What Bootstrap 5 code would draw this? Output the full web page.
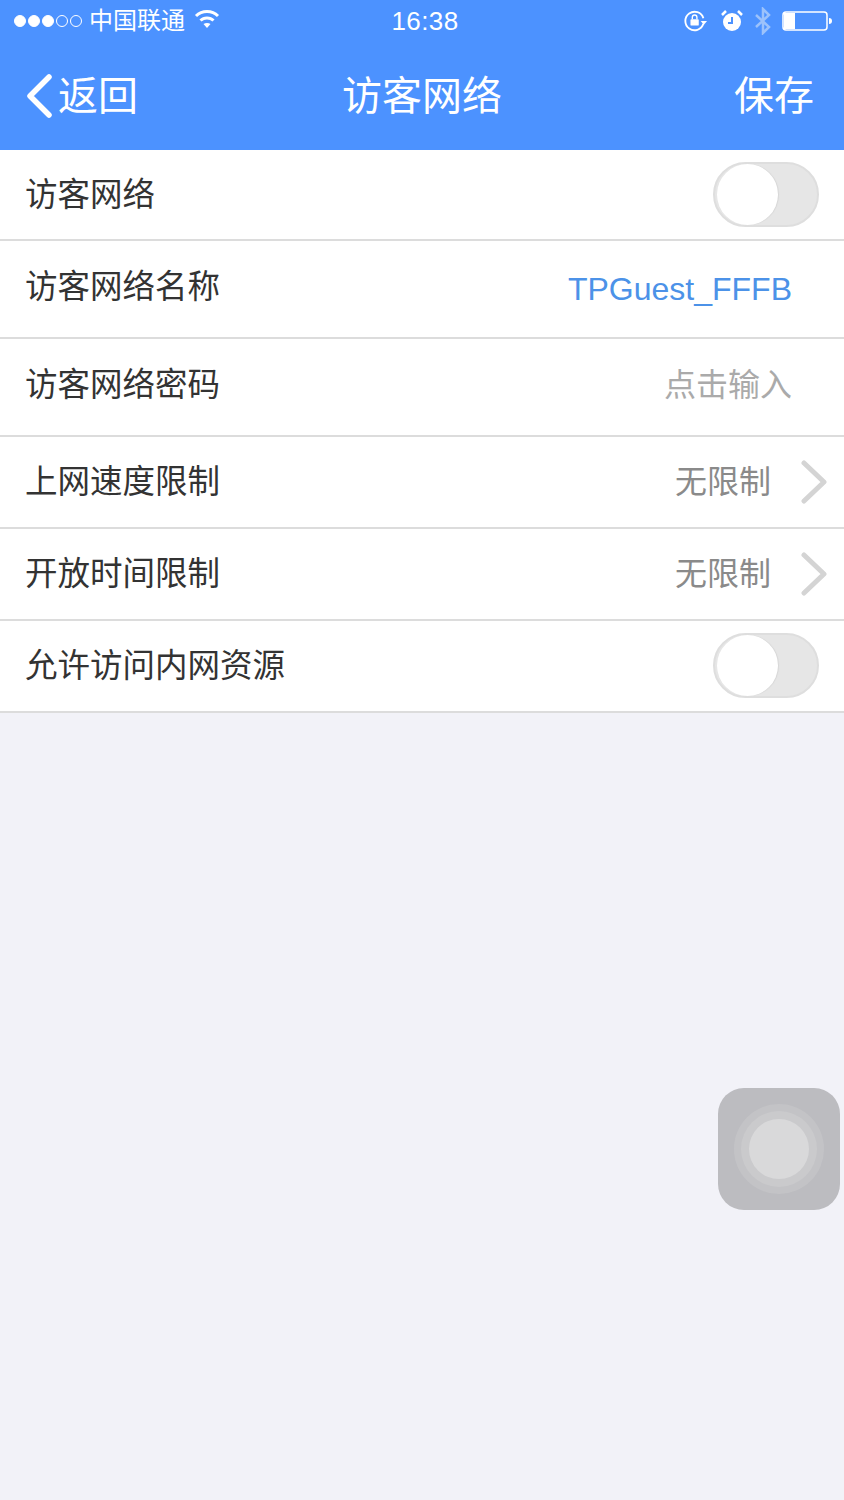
<!DOCTYPE html>
<html lang="zh-CN">
<head>
    <meta charset="UTF-8">
    <meta name="viewport" content="width=device-width, initial-scale=1">
    <title>访客网络</title>
    <link href="https://cdn.jsdelivr.net/npm/bootstrap@5.3.3/dist/css/bootstrap.min.css" rel="stylesheet">
    <style>
        body {
            background-color: #f2f2f8;
            font-family: "Liberation Sans", "Noto Sans CJK SC", sans-serif;
            color: #333;
            min-height: 1500px;
            position: relative;
        }

        /* blue header */
        .app-head {
            background-color: #4c92ff;
            color: #fff;
            height: 150px;
        }
        .status-line {
            height: 42px;
            padding: 0 12px 0 14px;
            font-size: 24px;
        }
        .sig-dots { gap: 2px; width: 69px; margin-right: 6px; }
        .sig-dot { width: 12px; height: 12px; border-radius: 50%; border: 1px solid #fff; }
        .sig-dot.on { background-color: #fff; }
        .clock-text { left: 6px; right: 0; top: 5px; text-align: center; font-size: 26px; line-height: 32px; letter-spacing: .4px; }
        .title-line { height: 108px; padding: 0 30px 0 26px; font-size: 40px; }
        .title-text { left: 0; right: 0; top: 0; bottom: 0; font-size: 40px; }
        .icon-alarm { margin-left: 13px; }
        .icon-blue { margin-left: 11px; }
        .icon-batt { margin-left: 10px; }

        /* settings rows */
        .set-row {
            background-color: #fff;
            border-bottom: 2px solid #dcdcdc;
            padding: 0 0 0 25px;
            font-size: 32.5px;
            line-height: 40px;
            color: #333;
        }
        .row-short { height: 92px; }
        .row-first { height: 91px; }
        .row-tall { height: 98px; padding-bottom: 4px; }
        .val-blue { color: #4c92e8; padding-right: 52px; padding-top: 4px; font-size: 32px; }
        .val-hint { color: #aaa; padding-right: 52px; font-size: 32px; }
        .val-gray { color: #8a8a8a; margin-right: 30px; font-size: 32px; }
        .row-chev { margin-right: 17px; }

        /* switch drawn like the iOS one */
        .ios-switch {
            width: 106px;
            height: 65px;
            margin-right: 25px;
            border-radius: 33px;
            background-color: #e6e6e6;
            border: 2px solid #dedede;
            position: relative;
        }
        .row-short .ios-switch { margin-top: -2px; }
        .ios-knob {
            position: absolute;
            left: 2px;
            top: 0;
            width: 61px;
            height: 61px;
            border-radius: 50%;
            background-color: #fff;
            box-shadow: 1px 0 1px #d6d6d6;
        }

        /* assistive touch floating button */
        .assist-btn {
            position: absolute;
            left: 718px;
            top: 1088px;
            width: 122px;
            height: 122px;
            border-radius: 26px;
            background-color: #bcbcc0;
        }
        .assist-r1, .assist-r2, .assist-r3 { border-radius: 50%; }
        .assist-r1 { width: 90px; height: 90px; background-color: #c3c3c6; }
        .assist-r2 { width: 76px; height: 76px; background-color: #cacacc; }
        .assist-r3 { width: 60px; height: 60px; background-color: #d9d9da; }
    </style>
</head>
<body>

<div class="app-head">
    <div class="status-line d-flex align-items-center position-relative">
        <div class="sig-dots d-flex align-items-center">
            <span class="sig-dot on"></span>
            <span class="sig-dot on"></span>
            <span class="sig-dot on"></span>
            <span class="sig-dot"></span>
            <span class="sig-dot"></span>
        </div>
        <span>中国联通</span>
        <svg class="ms-2 mb-1" width="28" height="22" viewBox="0 0 28 22" fill="none" stroke="#fff" stroke-width="3">
            <path d="M3 8 C9 2 19 2 25 8"/>
            <path d="M7.500 12.500 C11 9 17 9 20.500 12.500"/>
            <path d="M14 20 L10.500 16 C12.500 14.500 15.500 14.500 17.500 16 Z" fill="#fff" stroke="none"/>
        </svg>
        <div class="clock-text position-absolute">16:38</div>
        <div class="ms-auto d-flex align-items-center">
            <svg width="24" height="24" viewBox="0 0 26 24" fill="none" stroke="#fff" stroke-width="2">
                <path d="M21 15 A10 10 0 1 1 21 9"/>
                <path d="M18 12 h7 l-3.500 4 z" fill="#fff" stroke="none"/>
                <rect x="7" y="10" width="9" height="7" rx="1" fill="#fff" stroke="none"/>
                <path d="M9 10 V8 a2.500 2.500 0 0 1 5 0 V10" stroke-width="1.500"/>
            </svg>
            <svg class="icon-alarm" width="22" height="22" viewBox="0 0 22 22">
                <circle cx="11" cy="12" r="9" fill="#fff"/>
                <path d="M11 7 V13 H7" fill="none" stroke="#4c92ff" stroke-width="2"/>
                <path d="M1 5 L5 1 M21 5 L17 1" stroke="#fff" stroke-width="2.500"/>
            </svg>
            <svg class="icon-blue" width="18" height="28" viewBox="0 0 18 28" fill="none" stroke="#9cc2fb" stroke-width="2.500">
                <path d="M2 8 L15 20 L9 26 V2 L15 8 L2 20"/>
            </svg>
            <svg class="icon-batt" width="50" height="20" viewBox="0 0 50 20">
                <rect x="1" y="1" width="44" height="18" rx="3" fill="none" stroke="#fff" stroke-width="1.500"/>
                <rect x="2" y="2" width="11" height="16" fill="#fff"/>
                <path d="M47 7 a3 3 0 0 1 0 6 z" fill="#fff"/>
            </svg>
        </div>
    </div>
    <div class="title-line d-flex align-items-center justify-content-between position-relative">
        <div class="d-flex align-items-center">
            <svg width="32" height="44" viewBox="0 0 32 44" fill="none" stroke="#fff" stroke-width="5.500" stroke-linecap="round" stroke-linejoin="round">
                <path d="M23 3 L4 22 L23 41"/>
            </svg>
            <span>返回</span>
        </div>
        <div class="title-text position-absolute d-flex align-items-center justify-content-center">访客网络</div>
        <span>保存</span>
    </div>
</div>

<div class="set-row row-first d-flex align-items-center justify-content-between">
    <span>访客网络</span>
    <div class="ios-switch"><div class="ios-knob"></div></div>
</div>
<div class="set-row row-tall d-flex align-items-center justify-content-between">
    <span>访客网络名称</span>
    <span class="val-blue">TPGuest_FFFB</span>
</div>
<div class="set-row row-tall d-flex align-items-center justify-content-between">
    <span>访客网络密码</span>
    <span class="val-hint">点击输入</span>
</div>
<div class="set-row row-short d-flex align-items-center">
    <span class="me-auto">上网速度限制</span>
    <span class="val-gray">无限制</span>
    <svg class="row-chev" width="26" height="44" viewBox="0 0 26 44" fill="none" stroke="#d4d4d4" stroke-width="5" stroke-linecap="round" stroke-linejoin="round">
        <path d="M3 3 L23 22 L3 41"/>
    </svg>
</div>
<div class="set-row row-short d-flex align-items-center">
    <span class="me-auto">开放时间限制</span>
    <span class="val-gray">无限制</span>
    <svg class="row-chev" width="26" height="44" viewBox="0 0 26 44" fill="none" stroke="#d4d4d4" stroke-width="5" stroke-linecap="round" stroke-linejoin="round">
        <path d="M3 3 L23 22 L3 41"/>
    </svg>
</div>
<div class="set-row row-short d-flex align-items-center justify-content-between">
    <span>允许访问内网资源</span>
    <div class="ios-switch"><div class="ios-knob"></div></div>
</div>

<div class="assist-btn d-flex align-items-center justify-content-center">
    <div class="assist-r1 d-flex align-items-center justify-content-center">
        <div class="assist-r2 d-flex align-items-center justify-content-center">
            <div class="assist-r3"></div>
        </div>
    </div>
</div>

<script src="https://cdn.jsdelivr.net/npm/bootstrap@5.3.3/dist/js/bootstrap.bundle.min.js"></script>
</body>
</html>
